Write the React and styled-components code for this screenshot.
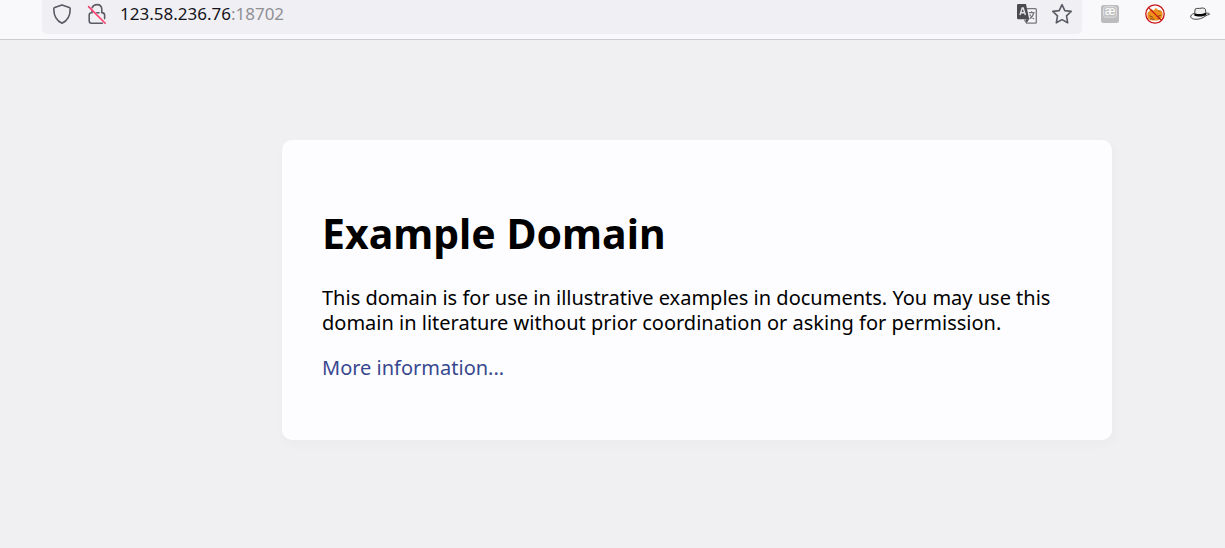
import React from "react";
import styled, { createGlobalStyle } from "styled-components";

const GlobalStyle = createGlobalStyle`
  body {
    margin: 0;
    background-color: #f0f0f2;
    font-family: "Noto Sans", "Open Sans", sans-serif;
  }
`;

const Toolbar = styled.header`
  display: flex;
  align-items: flex-start;
  justify-content: space-between;
  gap: 18px;
  height: 39px;
  padding: 0 15px 0 42px;
  background-color: #f9f9fb;
  border-bottom: 1px solid #cccccf;
`;

const AddressBar = styled.div`
  display: flex;
  flex: 1;
  align-items: center;
  height: 28px;
  padding: 0 10px 6px;
  background-color: #f0f0f4;
  border-radius: 0 0 5px 5px;
`;

const IconButton = styled.button`
  display: flex;
  flex: none;
  width: 20px;
  height: 20px;
  padding: 0;
  margin-right: ${(props) => props.$gap || 0}px;
  border: none;
  background: none;
  color: #5b5b66;
`;

const AddressInput = styled.input`
  field-sizing: content;
  padding: 0;
  border: none;
  outline: none;
  background: none;
  color: ${(props) => (props.$muted ? "#8f8f94" : "#15141a")};
  font-family: inherit;
  font-size: 17px;
  line-height: 26px;
`;

const Spacer = styled.div`
  flex: 1;
`;

const Extensions = styled.div`
  display: flex;
  align-items: center;
  gap: 25px;
  height: 28px;
`;

const Icon = styled.svg`
  width: 20px;
  height: 20px;
  overflow: visible;
`;

const Page = styled.main`
  padding: 100px 113px 100px 282px;
`;

const Card = styled.section`
  max-width: 750px;
  padding: 65px 40px 60px;
  background-color: #fdfdff;
  border-radius: 10px;
  box-shadow: 2px 4px 9px 2px rgba(0, 0, 0, 0.02);
`;

const Heading = styled.h1`
  margin: 0 0 24px;
  color: #000;
  font-size: 41px;
  line-height: 56px;
`;

const Paragraph = styled.p`
  margin: 20px 0 0;
  color: #000;
  font-size: 20px;
  line-height: 25px;
`;

const MoreLink = styled.a`
  color: #38488f;
  text-decoration: none;
`;

const ShieldIcon = () => (
  <Icon viewBox="0 0 20 20" fill="none" stroke="currentColor" strokeWidth="1.6" strokeLinejoin="round">
    <path d="M10 .9 L17.3 3.6 Q18.2 4 18.2 5 C18.2 11.5 16 16.6 10 19.2 C4 16.6 1.8 11.5 1.8 5 Q1.8 4 2.7 3.6 Z" />
  </Icon>
);

const InsecureIcon = () => (
  <Icon viewBox="0 0 20 20" fill="none" strokeWidth="1.6" strokeLinecap="round">
    <path d="M5.2 3.6 C6 1.6 7.8 .6 10 .6 C13 .6 14.8 2.6 14.8 5.4 V8.6 C16.8 8.7 17.6 9.5 17.6 11 V14.6" stroke="currentColor" />
    <path d="M5 6.6 V8.8 H4.6 C3 8.8 2.2 9.7 2.2 11 V17 C2.2 18.5 3 19.2 4.4 19.2 H15.4" stroke="currentColor" />
    <path d="M9.8 8.8 H12" stroke="currentColor" />
    <path d="M1.6 2.6 L18.2 19.2" stroke="#ff3f6e" />
  </Icon>
);

const TranslateIcon = () => (
  <Icon viewBox="0 0 20 20" fill="none">
    <path d="M9 4.7 H18.4 Q19.3 4.7 19.3 5.6 V18.2 Q19.3 19.1 18.4 19.1 H9.6 L7.4 15.6" fill="#f5f5f8" stroke="#77777c" strokeWidth="1.3" />
    <path d="M1.2 0 H9 L12.2 15.2 H1.2 Q0 15.2 0 14 V1.2 Q0 0 1.2 0 Z" fill="#4b4b50" />
    <path d="M8.6 15.2 H12.2 L9.6 19 Z" fill="#4b4b50" />
    <path d="M3 11 L5.2 4 H6.2 L8.4 11 M3.8 8.7 H7.6" stroke="#e6e6ea" strokeWidth="1.4" />
    <path d="M11.8 8.7 H17.6 M14.6 7.2 V8.7 M16.6 8.8 C16.2 11.6 14.6 13.6 12.6 14.8 M12.8 10.6 C13.8 12.8 15.2 14.2 17.2 15" stroke="#77777c" strokeWidth="1.2" />
  </Icon>
);

const StarIcon = () => (
  <Icon viewBox="0 0 20 20" fill="none" stroke="currentColor" strokeWidth="1.6" strokeLinejoin="round">
    <path d="M10 .7 L12.8 6.6 L19.2 7.4 L14.5 11.9 L15.7 18.8 L10 15.6 L4.3 18.8 L5.5 11.9 L.8 7.4 L7.2 6.6 Z" />
  </Icon>
);

const LigatureIcon = () => (
  <Icon viewBox="0 0 20 20">
    <rect x="1" y="1" width="18" height="18" rx="2.5" fill="#bcbcbe" />
    <rect x="3.6" y="2.6" width="12.8" height="10.6" rx="2" fill="#c2c2c4" stroke="#dededf" strokeWidth="1" />
    <text x="10" y="10.8" textAnchor="middle" fontSize="12" fill="#ffffff">æ</text>
  </Icon>
);

const BlockedIcon = () => (
  <Icon viewBox="0 0 20 20" fill="none">
    <path d="M2.6 8.6 C4.4 7.8 5 5.6 6.8 5.8 L8.8 6.8 L10.2 4.2 L12.4 4.8 L12.8 6.6 C15.6 5.6 17.8 7.2 17.6 10.4 C17.8 14 15 16.4 10.8 16.4 C6.6 17.2 2.8 15.8 2.4 12.6 Z" fill="#ef8f1c" />
    <path d="M4.6 11.8 L7.8 13.2 M5 14.8 L9.4 15.2 M11.6 12.6 L15.8 11.4 M12.6 14.6 L14.8 13.8" stroke="#7e4a14" strokeWidth="1" />
    <path d="M5.8 5.6 L8.4 6.8 M12.4 6.8 L15.4 7.2" stroke="#b96711" strokeWidth="1" />
    <circle cx="10" cy="10" r="9.2" stroke="#c81414" strokeWidth="1.3" />
    <path d="M3.6 3.6 L16.4 16.4" stroke="#c81414" strokeWidth="1.3" />
  </Icon>
);

const HatIcon = () => (
  <Icon viewBox="0 0 20 20" fill="none">
    <path d="M4.4 9.4 C1.4 10.2 .2 11.8 .8 13.2 C1.8 15.4 6.6 15.8 10.6 14.6 C14 13.6 16.6 10.6 19.4 10.4" stroke="#444" strokeWidth="1" />
    <path d="M16.2 9.4 C18 8.8 19.6 9.2 19.4 10.4" stroke="#444" strokeWidth="1" />
    <path d="M5.2 5 C7 3.8 9 4.8 11 4.2 C13.2 3.6 15 4.4 15.4 5.4 L16 9.4 C13 11 8 11.2 4.6 9.8 Z" fill="#efefef" stroke="#333" strokeWidth=".9" />
    <path d="M4.6 9.4 C8 10.4 12.6 10.2 16 8.8 L16.3 11 C13.2 12.8 7.4 13 4.2 11.4 Z" fill="#080808" />
  </Icon>
);

const App = () => (
  <>
    <GlobalStyle />
    <Toolbar>
      <AddressBar>
        <IconButton aria-label="Tracking protection" $gap={15}>
          <ShieldIcon />
        </IconButton>
        <IconButton aria-label="Connection is not secure" $gap={13}>
          <InsecureIcon />
        </IconButton>
        <AddressInput aria-label="Host" defaultValue="123.58.236.76" />
        <AddressInput aria-label="Port" defaultValue=":18702" $muted />
        <Spacer />
        <IconButton aria-label="Translate page" $gap={15}>
          <TranslateIcon />
        </IconButton>
        <IconButton aria-label="Bookmark page">
          <StarIcon />
        </IconButton>
      </AddressBar>
      <Extensions>
        <IconButton aria-label="Text encoding">
          <LigatureIcon />
        </IconButton>
        <IconButton aria-label="Blocker">
          <BlockedIcon />
        </IconButton>
        <IconButton aria-label="Hat">
          <HatIcon />
        </IconButton>
      </Extensions>
    </Toolbar>
    <Page>
      <Card>
        <Heading>Example Domain</Heading>
        <Paragraph>
          This domain is for use in illustrative examples in documents. You may use this domain in literature without prior coordination or asking for permission.
        </Paragraph>
        <Paragraph>
          <MoreLink href="#more">More information...</MoreLink>
        </Paragraph>
      </Card>
    </Page>
  </>
);

export default App;
